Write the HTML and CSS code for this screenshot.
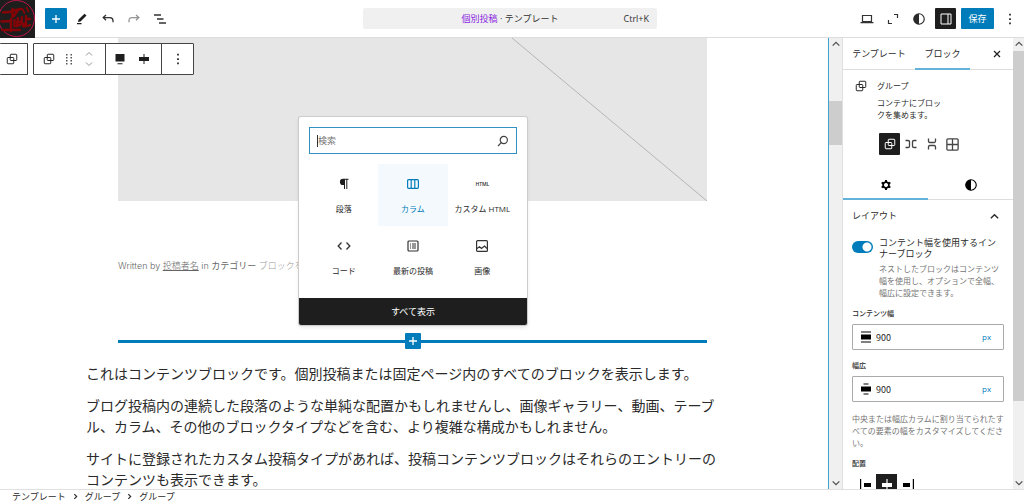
FILE: index.html
```html
<!DOCTYPE html>
<html lang="ja">
<head>
<meta charset="utf-8">
<meta name="viewport" content="width=device-width, initial-scale=1">
<title>個別投稿 · テンプレート</title>
<link rel="stylesheet" href="styles.css">
</head>
<body>
<svg class="sprite" aria-hidden="true">
  <symbol id="i-group" viewBox="0 0 24 24"><path fill="none" stroke="currentColor" stroke-width="2" d="M10 2.500h10a1.500 1.500 0 0 1 1.500 1.500v9.500a1.500 1.500 0 0 1-1.500 1.500H10a1.500 1.500 0 0 1-1.500-1.500V4A1.500 1.500 0 0 1 10 2.500zM4 9H14a1.500 1.500 0 0 1 1.500 1.500V20a1.500 1.500 0 0 1-1.500 1.500H4A1.500 1.500 0 0 1 2.500 20v-9.500A1.500 1.500 0 0 1 4 9z"/></symbol>
  <symbol id="i-plus" viewBox="0 0 24 24"><path stroke="currentColor" stroke-width="2.600" d="M12 4v16M4 12h16"/></symbol>
  <symbol id="i-dots" viewBox="0 0 24 24"><path fill="currentColor" d="M10.500 3h3v3h-3zM10.500 10.500h3v3h-3zM10.500 18h3v3h-3z"/></symbol>
  <symbol id="i-contrast" viewBox="0 0 24 24"><circle cx="12" cy="12" r="9" fill="none" stroke="currentColor" stroke-width="2"/><path fill="currentColor" d="M12 3a9 9 0 0 0 0 18z"/></symbol>
  <symbol id="i-gear" viewBox="0 0 24 24"><path fill="none" stroke="currentColor" stroke-width="3.600" stroke-linejoin="round" d="M12 5.500l5.600 3.200v6.600L12 18.500l-5.600-3.200V8.700z"/><path stroke="currentColor" stroke-width="4" d="M12 2v4M12 18v4M3.300 7l3.500 2M17.200 15l3.500 2M3.300 17l3.500-2M17.200 9l3.500-2"/></symbol>
  <symbol id="i-up" viewBox="0 0 12 12"><path fill="none" stroke="currentColor" stroke-width="1.500" d="M2 8l4-4 4 4"/></symbol>
  <symbol id="i-down" viewBox="0 0 12 12"><path fill="none" stroke="currentColor" stroke-width="1.500" d="M2 4l4 4 4-4"/></symbol>
  <symbol id="i-next" viewBox="0 0 12 12"><path fill="none" stroke="currentColor" stroke-width="2" d="M4 2l4 4-4 4"/></symbol>
</svg>

<header class="topbar">
  <div class="topbar-left">
    <a class="logo" href="#" aria-label="サイト">
      <svg viewBox="0 0 35 38" width="35" height="38" fill="none" stroke="#850407" stroke-linecap="round">
        <circle cx="16.500" cy="18.500" r="18" stroke="#c0154a"/>
        <path stroke-width="2.400" d="M3 12.500l10-1M12.500 9v8M13 10.500l8-1.500M18 10l-4 6M1.500 21.500l9-.5M11 19v12M2 30h18M14.500 20v6M18 18l-1 8 3-1M17 22h5M22 17l-.5 6M26 16v8.500M26 19h4M26 24q-4-1-3 2 3 1 7-1"/>
        <path stroke-width="1.800" d="M22.500 9l2 4M26.500 7.500l2 4"/>
      </svg>
    </a>
    <button class="insert" aria-label="ブロック挿入"><svg width="12" height="12"><use href="#i-plus"/></svg></button>
    <button class="tool" aria-label="ツール"><svg viewBox="0 0 12 12" width="12" height="12"><path fill="#1e1e1e" d="M8.500.8l2 1.800-6 5.800-2.500.6.500-2.500zM1 10h4.500v1.300H1z"/></svg></button>
    <button class="tool" aria-label="元に戻す"><svg viewBox="0 0 12 12" width="12" height="12" fill="none" stroke="#333" stroke-width="1.300"><path d="M4 2L1.200 4.600 4 7.200M1.200 4.600H8q3 0 3 3.200v1.500"/></svg></button>
    <button class="tool faded" aria-label="やり直す"><svg viewBox="0 0 12 12" width="12" height="12" fill="none" stroke="currentColor" stroke-width="1.300"><path d="M8 2l2.800 2.600L8 7.200M10.800 4.600H4q-3 0-3 3.200v1.500"/></svg></button>
    <button class="tool" aria-label="リスト表示"><svg viewBox="0 0 12 12" width="12" height="12" stroke="#333" stroke-width="1.300"><path d="M0 2h7M3 6h6.500M5 10h7"/></svg></button>
  </div>
  <button class="command"><span></span><span><b>個別投稿</b> · テンプレート</span><kbd>Ctrl+K</kbd></button>
  <div class="topbar-right">
    <button class="tool" aria-label="表示"><svg viewBox="0 0 14 12" width="14" height="12" fill="none" stroke="#333" stroke-width="1.200"><path d="M2.500 2.500h9v6h-9zM.5 9.700h13"/></svg></button>
    <button class="tool" aria-label="拡大"><svg viewBox="0 0 12 12" width="12" height="12" fill="none" stroke="#333" stroke-width="1.200"><path d="M7 1.500h3.500V5M1.500 7v3.500H5"/></svg></button>
    <button class="tool" aria-label="スタイル"><svg width="14" height="14"><use href="#i-contrast"/></svg></button>
    <button class="tool pressed" aria-label="設定"><svg viewBox="0 0 12 12" width="12" height="12" fill="none" stroke="#fff"><path d="M1 1h10v10H1zM8 1v10"/></svg></button>
    <button class="save">保存</button>
    <button class="tool more" aria-label="オプション"><svg width="14" height="14"><use href="#i-dots"/></svg></button>
  </div>
</header>

<div class="workspace">
  <main class="canvas">
    <div class="cover"><svg viewBox="0 0 589 163" preserveAspectRatio="none"><path stroke="#b5b5b5" d="M394 0l195 163"/></svg></div>
    <p class="meta">Written by <a href="#">投稿者名</a> in <strong>カテゴリー</strong> <span>ブロックを追加</span></p>
    <div class="insertion"><button aria-label="ブロックを追加"><svg width="12" height="12"><use href="#i-plus"/></svg></button></div>
    <article class="post">
      <p>これはコンテンツブロックです。個別投稿または固定ページ内のすべてのブロックを表示します。</p>
      <p>ブログ投稿内の連続した段落のような単純な配置かもしれませんし、画像ギャラリー、動画、テーブル、カラム、その他のブロックタイプなどを含む、より複雑な構成かもしれません。</p>
      <p>サイトに登録されたカスタム投稿タイプがあれば、投稿コンテンツブロックはそれらのエントリーのコンテンツも表示できます。</p>
    </article>

    <div class="block-toolbar">
      <div class="bar first"><button aria-label="親ブロック"><svg width="12" height="12"><use href="#i-group"/></svg></button></div>
      <div class="bar">
        <div class="seg seg-a">
          <button aria-label="グループ"><svg width="12" height="12"><use href="#i-group"/></svg></button>
          <button aria-label="ドラッグ"><svg viewBox="0 0 8 12" width="8" height="12" fill="#555"><path d="M1 1h1.500v1.500H1zM5.500 1H7v1.500H5.500zM1 4h1.500v1.500H1zM5.500 4H7v1.500H5.500zM1 7h1.500v1.500H1zM5.500 7H7v1.500H5.500zM1 10h1.500v1.500H1zM5.500 10H7v1.500H5.500z"/></svg></button>
          <button aria-label="移動" class="faded"><svg viewBox="0 0 10 16" width="10" height="16" fill="none" stroke="currentColor"><path d="M2 4.500l3-3 3 3M2 11.500l3 3 3-3"/></svg></button>
        </div>
        <div class="seg seg-b">
          <button aria-label="配置"><svg viewBox="0 0 12 12" width="12" height="12" fill="#1e1e1e"><path d="M1.500 1h9v7.500h-9zM3.500 10.200h5v1h-5z"/></svg></button>
          <button aria-label="揃え"><svg viewBox="0 0 12 12" width="12" height="12" fill="#1e1e1e"><path d="M1 4h10v4H1zM5.500 1h1v10h-1z"/></svg></button>
        </div>
        <div class="seg seg-c"><button aria-label="オプション"><svg width="14" height="14"><use href="#i-dots"/></svg></button></div>
      </div>
    </div>

    <section class="inserter" aria-label="ブロック挿入">
      <div class="search">
        <input type="search" aria-label="検索" placeholder="検索">
        <svg viewBox="0 0 12 12" width="12" height="12" fill="none" stroke="#444" stroke-width="1.200"><circle cx="6.800" cy="5" r="3.600"/><path d="M4.300 7.700L1 11"/></svg>
      </div>
      <div class="blocks">
        <button><svg viewBox="0 0 12 12" width="12" height="12" fill="#1e1e1e"><path d="M5 .8h5.500v1H9.300V11H8.300V1.800H7V11H6V7H5A3.100 3.100 0 0 1 5 .8z"/></svg>段落</button>
        <button class="active"><svg viewBox="0 0 12 12" width="12" height="12" fill="none" stroke="currentColor" stroke-width="1.200"><rect x=".6" y="1.700" width="10.800" height="8.600" rx="1"/><path d="M4.200 2v8M7.800 2v8"/></svg>カラム</button>
        <button><span class="html-icon">HTML</span>カスタム HTML</button>
        <button><svg viewBox="0 0 14 12" width="14" height="12" fill="none" stroke="#333" stroke-width="1.300"><path d="M4.500 2.500L1.200 6l3.300 3.500M9.500 2.500L12.800 6 9.500 9.500"/></svg>コード</button>
        <button><svg viewBox="0 0 12 12" width="12" height="12" fill="none" stroke="#333" stroke-width="1.200"><rect x="1" y="1" width="10" height="10" rx="1"/><path d="M3 4h1M5 4h4M3 6h1M5 6h4M3 8h1M5 8h4"/></svg>最新の投稿</button>
        <button><svg viewBox="0 0 12 12" width="12" height="12" fill="none" stroke="#333" stroke-width="1.200"><rect x=".6" y=".6" width="10.800" height="10.800" rx="1"/><path d="M1 8.500l2.500-1.700L5.500 8.500l3-2.500L11 8.500"/></svg>画像</button>
      </div>
      <button class="show-all">すべて表示</button>
    </section>
  </main>

  <div class="track track-canvas" aria-hidden="true"><svg width="10" height="10"><use href="#i-up"/></svg><i></i><svg width="10" height="10"><use href="#i-down"/></svg></div>

  <aside class="sidebar">
    <nav class="tabs">
      <button>テンプレート</button><button class="current">ブロック</button>
      <button class="close" aria-label="閉じる"><svg viewBox="0 0 8 8" width="8" height="8" stroke="#1e1e1e" stroke-width="1.200"><path d="M1 1l6 6M7 1L1 7"/></svg></button>
    </nav>
    <div class="card">
      <svg width="12" height="12"><use href="#i-group"/></svg>
      <div><h2>グループ</h2><p>コンテナにブロックを集めます。</p></div>
    </div>
    <div class="variations">
      <button class="pressed" aria-label="グループ"><svg width="12" height="12"><use href="#i-group"/></svg></button>
      <button aria-label="横並び"><svg viewBox="0 0 12 12" width="12" height="12" fill="none" stroke="#444" stroke-width="1.300"><path d="M.5 2.500h2.500q1.500 0 1.500 1.300v4.400Q4.500 9.500 3 9.500H.5M11.500 2.500H9Q7.500 2.500 7.500 3.800v4.400Q7.500 9.500 9 9.500h2.500"/></svg></button>
      <button aria-label="縦積み"><svg viewBox="0 0 12 12" width="12" height="12" fill="none" stroke="#444" stroke-width="1.300"><path d="M2.500.5v2.500q0 1.500 1.300 1.500h4.400Q9.500 4.500 9.500 3V.5M2.500 11.500V9q0-1.500 1.300-1.500h4.400Q9.500 7.500 9.500 9v2.500"/></svg></button>
      <button aria-label="グリッド"><svg viewBox="0 0 12 12" width="13" height="13" fill="none" stroke="#444" stroke-width="1.200"><rect x=".8" y=".8" width="10.400" height="10.400" rx="1"/><path d="M6 1v10M1 6h10"/></svg></button>
    </div>
    <nav class="subtabs">
      <button class="current" aria-label="設定"><svg width="12" height="12"><use href="#i-gear"/></svg></button>
      <button aria-label="スタイル"><svg width="14" height="14"><use href="#i-contrast"/></svg></button>
    </nav>
    <section class="panel">
      <button class="panel-title">レイアウト<svg width="11" height="11"><use href="#i-up"/></svg></button>
      <div class="toggle">
        <input type="checkbox" id="inner" checked>
        <div><label for="inner">コンテント幅を使用するインナーブロック</label>
        <p class="help">ネストしたブロックはコンテンツ幅を使用し、オプションで全幅、幅広に設定できます。</p></div>
      </div>
      <label class="field-label" for="content-width">コンテンツ幅</label>
      <div class="field">
        <svg viewBox="0 0 12 12" width="12" height="12"><path d="M1 .5h10v1H1zM1 3.500h10v5H1zM1 10.500h10v1H1z"/></svg>
        <input id="content-width" type="text" value="900"><select aria-label="コンテンツ幅の単位"><option>px</option></select>
      </div>
      <label class="field-label wide" for="wide-width">幅広</label>
      <div class="field">
        <svg viewBox="0 0 12 12" width="12" height="12"><path d="M3.500.5h5v1h-5zM1 3.500h10v5H1zM3.500 10.500h5v1h-5z"/></svg>
        <input id="wide-width" type="text" value="900"><select aria-label="幅広の単位"><option>px</option></select>
      </div>
      <p class="help field-help">中央または幅広カラムに割り当てられたすべての要素の幅をカスタマイズしてください。</p>
      <h3 class="field-label">配置</h3>
      <div class="justify">
        <button aria-label="左揃え"><svg viewBox="0 0 12 12" width="12" height="12"><path d="M0 0h1.200v12H0zM4 4h7v4H4z"/></svg></button>
        <button class="pressed" aria-label="中央揃え"><svg viewBox="0 0 12 12" width="12" height="12" fill="#fff"><path d="M5.400 0h1.200v12H5.400zM1 4h10v4H1z"/></svg></button>
        <button aria-label="右揃え"><svg viewBox="0 0 12 12" width="12" height="12"><path d="M10.800 0H12v12h-1.200zM1 4h7v4H1z"/></svg></button>
      </div>
    </section>
  </aside>
  <div class="track track-side" aria-hidden="true"><svg width="10" height="10"><use href="#i-up"/></svg><i></i><svg width="10" height="10"><use href="#i-down"/></svg></div>
</div>

<footer class="crumbs">
  <a href="#">テンプレート</a><svg width="7" height="7"><use href="#i-next"/></svg><a href="#">グループ</a><svg width="7" height="7"><use href="#i-next"/></svg><a href="#">グループ</a>
</footer>
</body>
</html>
```
FILE: styles.css
```css
* { box-sizing: border-box; }

body {
  margin: 0;
  height: 100vh;
  display: flex;
  flex-direction: column;
  overflow: hidden;
  background: #fff;
  color: #2a2a2a;
  font: 9px/12px "Open Sans", "Noto Sans CJK JP", sans-serif;
}

button, input, select {
  margin: 0;
  padding: 0;
  border: 0;
  background: none;
  color: inherit;
  font: inherit;
}

button { display: flex; align-items: center; justify-content: center; }
p, h2, h3 { margin: 0; font-size: inherit; font-weight: normal; }
svg { display: block; flex: none; }
a { color: inherit; text-decoration: none; }
.sprite { position: absolute; width: 0; height: 0; }

/* Top bar */
.topbar {
  display: grid;
  grid-template-columns: 1fr 294px 1fr;
  align-items: center;
  flex: none;
  height: 38px;
  padding-right: 4px;
  border-bottom: 1px solid #ddd;
}
.topbar-left, .topbar-right { display: flex; align-items: center; height: 37px; }
.topbar-right { justify-content: flex-end; }
.logo { width: 35px; height: 38px; background: #1e1e1e; overflow: hidden; align-self: flex-start; }
.insert { width: 22px; height: 21px; margin: 0 2px 0 10px; border-radius: 1px; background: #007cba; color: #fff; }
.tool { width: 26px; height: 21px; }
.faded { color: #949494; }
.pressed { background: #1e1e1e; color: #fff; }
.tool.pressed { width: 21px; margin: 0 5px 0 3px; border-radius: 1px; }
.tool.more { width: 20px; margin-left: 6px; }
.save { width: 33px; height: 21px; border-radius: 1px; background: #007cba; color: #fff; }
.command {
  display: grid;
  grid-template-columns: 1fr auto 1fr;
  height: 21px;
  padding: 0 8px;
  border-radius: 2px;
  background: #f0f0f0;
  color: #2f2f2f;
}
.command b { color: #8a1fe0; font-weight: normal; }
.command kbd { font: inherit; text-align: right; }

/* Canvas */
.workspace { display: flex; flex: 1; min-height: 0; }
.canvas { position: relative; flex: 1; min-width: 0; overflow: hidden; border-right: 1px solid #3fa2d0; }
.cover { height: 163px; margin: 0 121px 0 118px; background: #e6e6e6; }
.cover svg { width: 100%; height: 100%; }
.meta { margin: 59px 121px 0 118px; color: #666; font-family: Inter, "Noto Sans CJK JP", sans-serif; font-weight: 300; }
.meta a { text-decoration: underline; }
.meta strong { font-weight: 400; }
.meta span { color: #999; }
.insertion {
  display: flex;
  align-items: center;
  justify-content: center;
  height: 16px;
  margin: 61px 121px 0 118px;
  background: linear-gradient(#007cba, #007cba) center / 100% 3px no-repeat;
}
.insertion button { width: 16px; height: 16px; border-radius: 1px; background: #007cba; color: #fff; }
.post { max-width: 726px; margin-top: 14px; padding-left: 86px; font-size: 14px; line-height: 21px; }
.post p + p { margin-top: 11px; }

/* Block toolbar */
.block-toolbar { position: absolute; top: 5px; left: 0; display: flex; gap: 5px; }
.bar { display: flex; height: 32px; border: 1px solid #444; border-radius: 1px; background: #fff; }
.bar.first { width: 28px; justify-content: center; border-left: 0; padding-right: 3px; }
.seg { display: flex; align-items: center; justify-content: center; }
.seg + .seg { border-left: 1px solid #444; }
.seg button { height: 30px; }
.seg-a { width: 71px; padding-right: 1px; }
.seg-a button { width: 20px; }
.seg-b { width: 56px; padding-right: 3px; }
.seg-b button { width: 24px; }
.seg-c { width: 32px; }

/* Inserter popover */
.inserter {
  position: absolute;
  top: 79px;
  left: 299px;
  width: 228px;
  border-radius: 2px;
  background: #fff;
  box-shadow: 0 0 0 1px #ccc, 0 2px 4px rgba(0, 0, 0, .12);
  overflow: hidden;
  font-size: 8px;
}
.search { display: flex; align-items: center; height: 27px; margin: 10px 10px 0; padding: 0 7px; border: 1px solid #3391c4; }
.search input { flex: 1; min-width: 0; outline: 0; border-left: 1px solid #333; font-size: 9px; }
.search input::placeholder { color: #757575; opacity: 1; }
.blocks { display: grid; grid-template-columns: repeat(3, 1fr); padding: 10px; }
.blocks button { flex-direction: column; justify-content: flex-start; gap: 13px; height: 62px; padding-top: 14px; line-height: 12px; white-space: nowrap; }
.blocks .active { background: #f3f9fc; color: #007cba; }
.html-icon { height: 12px; font-size: 5px; font-weight: 600; }
.show-all { width: 100%; height: 27px; background: #1e1e1e; color: #fff; font-size: 9px; }

/* Scroll tracks */
.track { display: flex; flex-direction: column; align-items: center; flex: none; padding: 1px 0; background: #f0f0f0; color: #505050; }
.track i { width: 100%; background: #cdcdcd; }
.track svg:last-child { margin-top: auto; }
.track-canvas { width: 13px; }
.track-canvas i { height: 44px; margin-top: 52px; }
.track-side { width: 11px; }
.track-side i { height: 350px; margin-top: 2px; }

/* Settings sidebar */
.sidebar { flex: none; width: 171px; overflow: hidden; border-left: 1px solid #e0e0e0; }
.tabs { display: flex; height: 32px; border-bottom: 1px solid #ddd; }
.tabs button { width: 55px; margin-bottom: -1px; }
.tabs button:first-child { width: 72px; }
.tabs .current { border-bottom: 2px solid #63b2d9; padding-top: 1px; }
.tabs .close { width: 24px; margin-left: auto; margin-right: 4px; }
.card { display: flex; gap: 10px; padding: 10px 12px 0; font-size: 8px; }
.card p { max-width: 68px; margin-top: 5px; }
.variations { display: flex; padding: 12px 0 0 36px; }
.variations button { width: 21px; height: 22px; border-radius: 1px; }
.subtabs { display: flex; height: 31px; margin-top: 14px; border-bottom: 1px solid #ddd; color: #000; }
.subtabs button { flex: 1; height: 31px; }
.subtabs .current { border-bottom: 2px solid #63b2d9; padding-top: 2px; }
.panel { padding: 0 9px; }
.panel-title { width: 100%; height: 32px; justify-content: space-between; padding-right: 4px; }
.toggle { display: flex; gap: 6px; margin-top: 5px; line-height: 11px; }
.toggle label { display: block; }
.toggle input {
  appearance: none;
  flex: none;
  width: 21px;
  height: 12px;
  margin-top: 4px;
  border-radius: 6px;
  background: radial-gradient(circle at 15px 6px, #fff 4px, #007cba 5px);
}
.help { margin-top: 4px; color: #757575; font-size: 8px; line-height: 12px; }
.field-label { display: block; margin: 10px 0 5px; font-size: 7px; line-height: 10px; font-weight: 500; }
.field-label.wide { margin-top: 11px; }
.field { display: flex; align-items: center; gap: 4px; height: 26px; padding: 0 11px 0 7px; border: 1px solid #aaa; border-radius: 1px; }
.field input { flex: 1; min-width: 0; font: 9px "Noto Sans CJK JP", sans-serif; }
.field select { appearance: none; color: #007cba; font-size: 8px; }
.field-help { margin: 11px -1px 0 0; }
.justify { display: flex; padding-left: 3px; }
.justify button { width: 21px; height: 22px; }

/* Breadcrumb */
.crumbs { display: flex; align-items: center; flex: none; gap: 6px; height: 14px; padding-left: 12px; border-top: 1px solid #e0e0e0; }
```
